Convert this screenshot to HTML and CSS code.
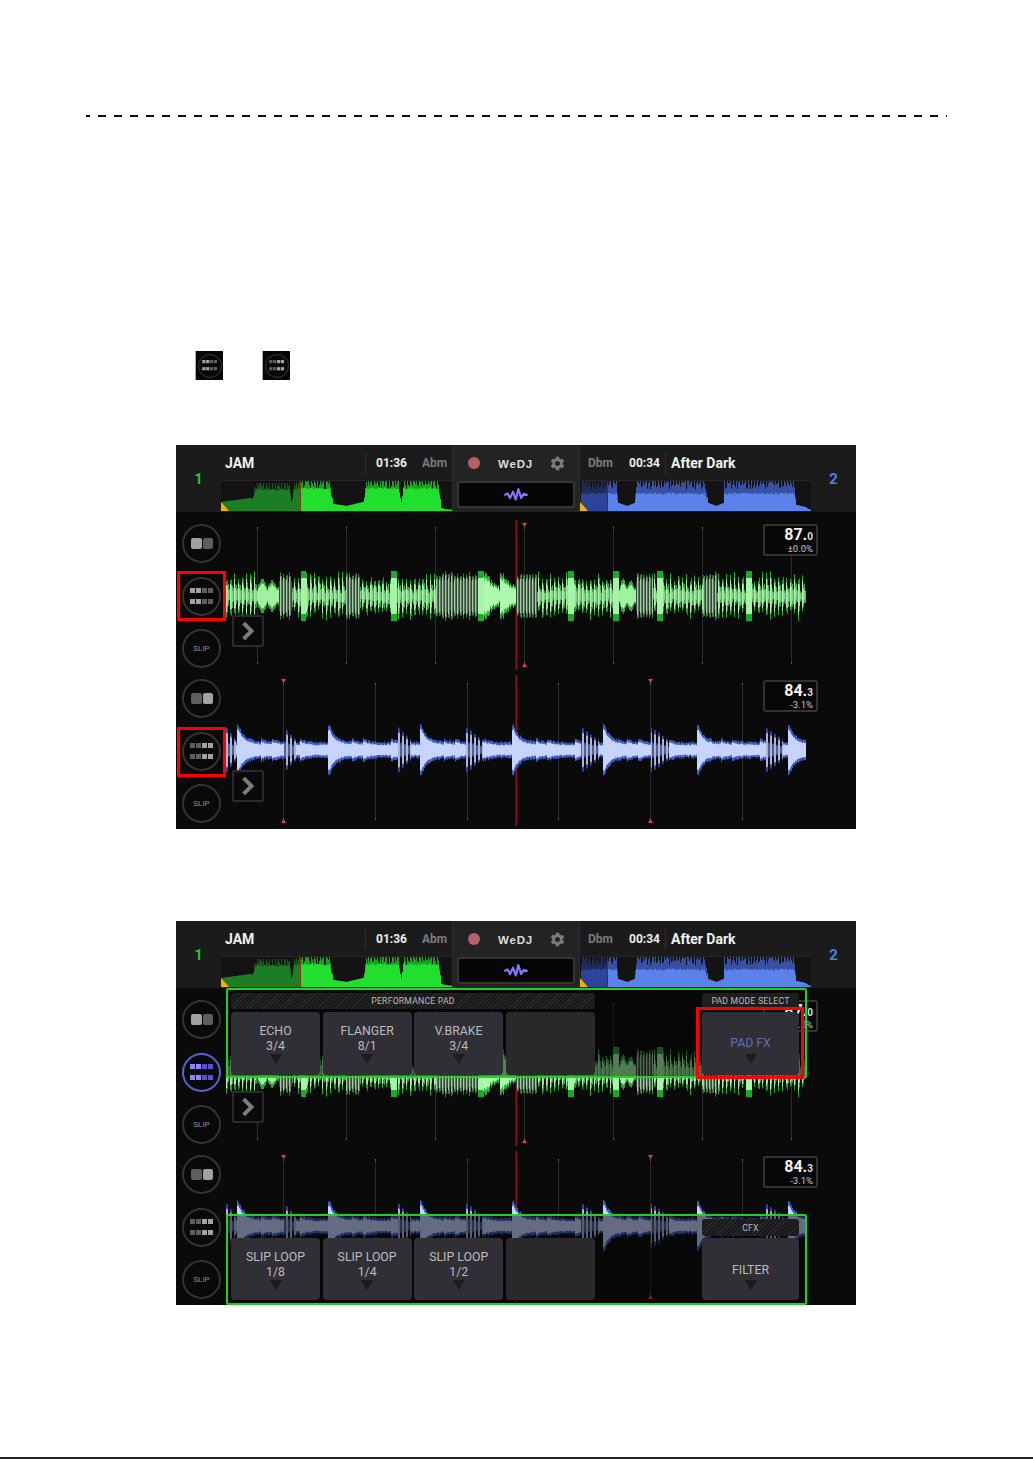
FILE: index.html
```html
<!DOCTYPE html>
<html lang="en">
<head>
<meta charset="utf-8">
<title>WeDJ pad mode</title>
<link rel="stylesheet" href="styles.css">
</head>
<body>
<svg class="defs" aria-hidden="true">
  <symbol id="split" viewBox="0 0 22 11">
    <rect class="a" x="0" y="0" width="11" height="11" rx="2"/>
    <rect class="b" x="12" y="0" width="10" height="11" rx="2"/>
  </symbol>
  <symbol id="cells" viewBox="0 0 24 17">
    <rect class="a" x="0" y="0" width="5" height="5"/><rect class="a" x="6" y="0" width="5" height="5"/>
    <rect class="b" x="12" y="0" width="5" height="5"/><rect class="b" x="18" y="0" width="5" height="5"/>
    <rect class="a" x="0" y="11" width="5" height="5"/><rect class="a" x="6" y="11" width="5" height="5"/>
    <rect class="b" x="12" y="11" width="5" height="5"/><rect class="b" x="18" y="11" width="5" height="5"/>
  </symbol>
  <symbol id="gear" viewBox="0 0 24 24">
    <path d="M19.14 12.94c.04-.3.06-.61.06-.94 0-.32-.02-.64-.07-.94l2.03-1.58a.49.49 0 0 0 .12-.61l-1.92-3.32a.488.488 0 0 0-.59-.22l-2.39.96c-.5-.38-1.03-.7-1.62-.94l-.36-2.54a.484.484 0 0 0-.48-.41h-3.84c-.24 0-.43.17-.47.41l-.36 2.54c-.59.24-1.13.57-1.62.94l-2.39-.96c-.22-.08-.47 0-.59.22L2.74 8.87c-.12.21-.08.47.12.61l2.03 1.58c-.05.3-.09.63-.09.94s.02.64.07.94l-2.03 1.58a.49.49 0 0 0-.12.61l1.92 3.32c.12.22.37.29.59.22l2.39-.96c.5.38 1.03.7 1.62.94l.36 2.54c.05.24.24.41.48.41h3.84c.24 0 .44-.17.47-.41l.36-2.54c.59-.24 1.13-.56 1.62-.94l2.39.96c.22.08.47 0 .59-.22l1.92-3.32c.12-.22.07-.47-.12-.61l-2.01-1.58zM12 15.6c-1.98 0-3.6-1.62-3.6-3.6s1.62-3.6 3.6-3.6 3.6 1.62 3.6 3.6-1.62 3.6-3.6 3.6z"/>
  </symbol>
  <symbol id="pulse" viewBox="0 0 67 40">
    <polyline points="1,22 10,17 17,30 25,12 33,34 40,5 48,30 55,18 66,22" fill="none" stroke="#8378ff" stroke-width="6" stroke-linejoin="round"/>
  </symbol>
</svg>

<main class="page">
  <div class="rule"></div>

  <div class="mini-row">
    <div class="mini lit-front"><div class="mini-ring"><svg class="mini-cells"><use href="#cells"/></svg></div></div>
    <div class="mini lit-back"><div class="mini-ring"><svg class="mini-cells"><use href="#cells"/></svg></div></div>
  </div>

  <section class="screen screen-first">
    <header class="top">
      <div class="deck-no green-no">1</div>
      <div class="track">
        <div class="meta">
          <span class="title title-left">JAM</span><i class="sep"></i>
          <span class="time time-left">01:36</span><span class="key">Abm</span>
        </div>
        <div class="overview"><svg class="ov" data-ov="green" width="231" height="30"></svg><i class="cue-mark"></i></div>
      </div>
      <div class="center">
        <div class="center-row"><i class="rec"></i><span class="logo">WeDJ</span><svg class="gear"><use href="#gear"/></svg></div>
        <div class="wave-btn"><svg class="pulse"><use href="#pulse"/></svg></div>
      </div>
      <div class="track">
        <div class="meta meta-right">
          <span class="key">Dbm</span><span class="time time-right">00:34</span><i class="sep"></i>
          <span class="title">After Dark</span>
        </div>
        <div class="overview"><svg class="ov" data-ov="blue" width="231" height="30"></svg><i class="cue-mark"></i></div>
      </div>
      <div class="deck-no blue-no">2</div>
    </header>
    <div class="decks">
      <div class="deck">
        <div class="btns lit-front">
          <div class="ring"><svg class="ic-split"><use href="#split"/></svg></div>
          <div class="ring"><svg class="ic-cells"><use href="#cells"/></svg></div>
          <div class="ring slip">SLIP</div>
        </div>
        <div class="stage">
          <svg class="wave" data-wave="green" width="630" height="155"></svg>
          <div class="bpm bpm-a"><div class="bpm-big"><b>87.</b><em>0</em></div><small>±0.0%</small></div>
          <div class="chev"><svg viewBox="0 0 32 32"><polyline points="11,7 20,16 11,25"/></svg></div>
        </div>
      </div>
      <div class="deck">
        <div class="btns lit-back">
          <div class="ring"><svg class="ic-split"><use href="#split"/></svg></div>
          <div class="ring"><svg class="ic-cells"><use href="#cells"/></svg></div>
          <div class="ring slip">SLIP</div>
        </div>
        <div class="stage">
          <svg class="wave" data-wave="blue" width="630" height="155"></svg>
          <div class="bpm bpm-b"><div class="bpm-big"><b>84.</b><em>3</em></div><small>-3.1%</small></div>
          <div class="chev"><svg viewBox="0 0 32 32"><polyline points="11,7 20,16 11,25"/></svg></div>
        </div>
      </div>
    </div>
    <i class="mark-red red-a"></i>
    <i class="mark-red red-b"></i>
  </section>

  <section class="screen screen-second">
    <header class="top">
      <div class="deck-no green-no">1</div>
      <div class="track">
        <div class="meta">
          <span class="title title-left">JAM</span><i class="sep"></i>
          <span class="time time-left">01:36</span><span class="key">Abm</span>
        </div>
        <div class="overview"><svg class="ov" data-ov="green" width="231" height="30"></svg><i class="cue-mark"></i></div>
      </div>
      <div class="center">
        <div class="center-row"><i class="rec"></i><span class="logo">WeDJ</span><svg class="gear"><use href="#gear"/></svg></div>
        <div class="wave-btn"><svg class="pulse"><use href="#pulse"/></svg></div>
      </div>
      <div class="track">
        <div class="meta meta-right">
          <span class="key">Dbm</span><span class="time time-right">00:34</span><i class="sep"></i>
          <span class="title">After Dark</span>
        </div>
        <div class="overview"><svg class="ov" data-ov="blue" width="231" height="30"></svg><i class="cue-mark"></i></div>
      </div>
      <div class="deck-no blue-no">2</div>
    </header>
    <div class="decks">
      <div class="deck">
        <div class="btns lit-front">
          <div class="ring"><svg class="ic-split"><use href="#split"/></svg></div>
          <div class="ring ring-on"><svg class="ic-cells"><use href="#cells"/></svg></div>
          <div class="ring slip">SLIP</div>
        </div>
        <div class="stage">
          <svg class="wave" data-wave="green" width="630" height="155"></svg>
          <div class="bpm bpm-a"><div class="bpm-big"><b>87.</b><em>0</em></div><small>±0.0%</small></div>
          <div class="chev"><svg viewBox="0 0 32 32"><polyline points="11,7 20,16 11,25"/></svg></div>
          <div class="panel panel-a">
            <div class="group">
              <div class="tag hatch">PERFORMANCE PAD</div>
              <div class="pads">
                <div class="pad">ECHO<br>3/4<i class="tri"></i></div>
                <div class="pad">FLANGER<br>8/1<i class="tri"></i></div>
                <div class="pad">V.BRAKE<br>3/4<i class="tri"></i></div>
                <div class="pad pad-empty"></div>
              </div>
            </div>
            <div class="group group-mode">
              <div class="tag">PAD MODE SELECT</div>
              <div class="pad pad-single pad-fx">PAD FX<i class="tri"></i></div>
            </div>
          </div>
        </div>
      </div>
      <div class="deck">
        <div class="btns lit-back">
          <div class="ring"><svg class="ic-split"><use href="#split"/></svg></div>
          <div class="ring"><svg class="ic-cells"><use href="#cells"/></svg></div>
          <div class="ring slip">SLIP</div>
        </div>
        <div class="stage">
          <svg class="wave" data-wave="blue" width="630" height="155"></svg>
          <div class="bpm bpm-b"><div class="bpm-big"><b>84.</b><em>3</em></div><small>-3.1%</small></div>
          <div class="panel panel-b">
            <div class="group">
              <div class="tag tag-blank"></div>
              <div class="pads">
                <div class="pad">SLIP LOOP<br>1/8<i class="tri"></i></div>
                <div class="pad">SLIP LOOP<br>1/4<i class="tri"></i></div>
                <div class="pad">SLIP LOOP<br>1/2<i class="tri"></i></div>
                <div class="pad pad-empty"></div>
              </div>
            </div>
            <div class="group group-mode">
              <div class="tag hatch">CFX</div>
              <div class="pad pad-single">FILTER<i class="tri"></i></div>
            </div>
          </div>
        </div>
      </div>
    </div>
    <i class="mark-green green-a"></i>
    <i class="mark-green green-b"></i>
    <i class="mark-red red-c"></i>
  </section>

  <div class="foot-line"></div>
</main>
<script src="wave.js"></script>
</body>
</html>
```

FILE: styles.css
```css
* { box-sizing: border-box; }
html, body { margin: 0; padding: 0; background: #fff; }
body { font-family: Roboto, "Liberation Sans", sans-serif; }
.defs { width: 0; height: 0; position: absolute; }
.page { width: 1033px; height: 1459px; display: flex; flex-direction: column; overflow: hidden; }

.rule {
  margin: 115px 0 0 86px; width: 861px; height: 2px; flex: none;
  background-image: linear-gradient(90deg, #111 0 4px, #fff 4px 12.5px, #111 12.5px 16px);
  background-size: 16px 2px;
}

.a { fill: var(--a); }
.b { fill: var(--b); }
.lit-front { --a: #a2a2a2; --b: #5e5e5e; }
.lit-back { --a: #5e5e5e; --b: #a2a2a2; }
.ring-on { --a: #8e84ff; --b: #5c52c8; }

.mini-row { display: flex; gap: 39px; margin: 234px 0 0 195px; flex: none; }
.mini { width: 28px; height: 29px; background: #060606; border-left: 1px solid #aaa; display: flex; align-items: center; justify-content: center; }
.mini-ring { width: 24px; height: 24px; border-radius: 50%; border: 1px solid #3a3a3a; display: flex; align-items: center; justify-content: center; }
.mini-cells { width: 16px; height: 11px; }

.screen { position: relative; width: 680px; height: 384px; margin-left: 176px; flex: none; background: #0a0a0a; color: #fff; }
.screen-first { margin-top: 65px; }
.screen-second { margin-top: 92px; }

.top { display: grid; grid-template-columns: 45px 231px 128px 231px 45px; height: 67px; background: #1b1b1b; }
.deck-no { font-size: 15px; font-weight: 700; display: flex; align-items: center; justify-content: center; }
.green-no { color: #22c43a; }
.blue-no { color: #4f7be8; }
.track { display: flex; flex-direction: column; }
.meta { height: 36px; display: flex; align-items: center; padding: 1px 0 0 4px; border-bottom: 1px solid #262626; }
.meta-right { padding-left: 8px; }
.title { font-size: 14px; font-weight: 700; color: #f2f2f2; }
.title-left { width: 135px; }
.sep { width: 1px; height: 21px; background: #2e2e2e; margin: 0 5px; flex: none; }
.time { font-size: 12px; font-weight: 700; color: #ececec; }
.time-left { margin-left: 5px; width: 46px; }
.time-right { margin-left: 15px; width: 32px; }
.key { font-size: 12px; font-weight: 700; color: #7b7b7b; width: 26px; }
.meta-right .sep { margin: 0 5px 0 4px; }
.overview { position: relative; height: 30px; background: #131313; }
.ov { display: block; }
.cue-mark { position: absolute; left: 0; bottom: 0; width: 0; height: 0; border-left: 8px solid #f0b400; border-top: 9px solid transparent; }

.center { background: #232323; border-left: 1px solid #2c2c2c; border-right: 1px solid #2c2c2c; display: flex; flex-direction: column; }
.center-row { height: 36px; display: flex; align-items: center; padding-left: 15px; }
.rec { width: 12px; height: 12px; border-radius: 50%; background: #b5606a; flex: none; }
.logo { margin-left: 18px; width: 36px; padding-top: 1px; font: 700 11.5px "Liberation Sans", sans-serif; letter-spacing: .8px; color: #ddd; white-space: nowrap; }
.gear { margin-left: 15px; width: 17px; height: 17px; fill: #7c7c7c; }
.wave-btn { margin: 0 4px 0 4px; height: 27px; background: #050505; border: 2px solid #353535; border-radius: 3px; display: flex; align-items: center; justify-content: center; }
.pulse { width: 24px; height: 15px; }

.decks { padding-top: 6px; }
.deck { height: 155px; display: flex; position: relative; }
.btns { width: 50px; padding: 6px 0 0 6px; display: flex; flex-direction: column; gap: 13.5px; flex: none; }
.ring { width: 39px; height: 39px; border-radius: 50%; border: 2px solid #333; background: #090909; display: flex; align-items: center; justify-content: center; flex: none; }
.ring-on { border-color: #5a5fd0; }
.slip { font-size: 8px; color: #8c8c8c; }
.ic-split { width: 22px; height: 11px; }
.ic-cells { width: 24px; height: 17px; margin-top: 1px; }

.stage { position: relative; width: 630px; height: 155px; }
.wave { display: block; filter: blur(.5px); }
.bpm { position: absolute; left: 537px; width: 55px; height: 32px; z-index: 1; background: #060606; border: 2px solid #333; border-radius: 3px; text-align: right; padding: 0 3px 0 0; }
.bpm-a { top: 6px; }
.bpm-b { top: 7px; }
.bpm-big { height: 17px; line-height: 17px; }
.bpm b { font-size: 16px; font-weight: 700; color: #f4f4f4; }
.bpm em { font-style: normal; font-weight: 700; font-size: 10px; color: #ddd; }
.bpm small { display: block; height: 11px; line-height: 11px; font-size: 9.5px; color: #c8c8c8; }
.chev { position: absolute; left: 6px; top: 97px; width: 32px; height: 32px; z-index: 1; border: 2px solid #2b2b2b; border-radius: 2px; background: #0a0a0a; }
.chev svg { display: block; width: 28px; height: 28px; }
.chev polyline { fill: none; stroke: #7c7c7c; stroke-width: 4.5; }

.panel { position: absolute; left: 0; width: 580px; background: rgba(4, 4, 4, .5); display: flex; justify-content: space-between; padding: 4px 7px 0 5px; }
.panel-a { top: -5px; height: 88px; }
.panel-b { top: 66px; height: 90px; }
.group { display: flex; flex-direction: column; gap: 3px; width: 364px; }
.group-mode { width: 97px; }
.panel-b .group { gap: 2px; }
.tag { position: relative; z-index: 2; height: 16px; border-radius: 3px; background: #1e1e1e; color: #bcbcbc; font-size: 8.7px; line-height: 17px; text-align: center; letter-spacing: .2px; white-space: nowrap; }
.panel-b .tag { height: 17px; line-height: 19px; }
.hatch { background: repeating-linear-gradient(135deg, #2a2a2a 0 1px, #191919 1px 3px); }
.tag-blank { visibility: hidden; }
.pads { display: grid; grid-template-columns: repeat(4, 89px); column-gap: 2.6px; }
.pad { position: relative; z-index: 2; height: 63px; border-radius: 4px; background: #2f2f35; color: #bdbdbd; font-size: 12.3px; line-height: 15px; text-align: center; padding-top: 12px; }
.panel-b .pad { height: 62px; }
.pad-empty { background: #292929; }
.pad-single { padding-top: 24px; }
.panel-b .pad-single { padding-top: 25px; }
.pad-fx { color: #666cb4; }
.tri { position: absolute; left: 50%; bottom: 11px; margin-left: -6px; width: 0; height: 0; border-left: 6px solid transparent; border-right: 6px solid transparent; border-top: 10px solid #1c1c1e; }
.panel-b .tri { bottom: 10px; }

.mark-red, .mark-green { position: absolute; z-index: 5; display: block; }
.mark-red { border: 3px solid #f00; }
.red-a { left: 1px; top: 126px; width: 49px; height: 50px; }
.red-b { left: 1px; top: 282px; width: 49px; height: 50px; }
.red-c { left: 520px; top: 86px; width: 108px; height: 72px; }
.mark-green { left: 50px; width: 581px; border: 2px solid #1fd21f; border-radius: 2px; }
.green-a { top: 67px; height: 90px; }
.green-b { top: 293px; height: 91px; }

.foot-line { margin-top: 152px; height: 2px; background: #222; flex: none; }
```

FILE: wave.js
```js
(function () {
  var NS = 'http://www.w3.org/2000/svg';
  function rng(seed) {
    var s = seed;
    return function () { s = (s * 16807) % 2147483647; return s / 2147483647; };
  }
  function Painter(svg) {
    this.svg = svg; this.layers = {}; this.order = [];
  }
  Painter.prototype.add = function (color, x, y0, y1) {
    if (!this.layers[color]) { this.layers[color] = []; this.order.push(color); }
    this.layers[color].push('M' + x + ' ' + y0.toFixed(1) + 'V' + y1.toFixed(1));
  };
  Painter.prototype.flush = function () {
    var self = this;
    this.order.forEach(function (c) {
      var p = document.createElementNS(NS, 'path');
      p.setAttribute('d', self.layers[c].join(''));
      p.setAttribute('stroke', c);
      p.setAttribute('stroke-width', '1');
      p.setAttribute('fill', 'none');
      self.svg.appendChild(p);
    });
    this.layers = {}; this.order = [];
  };
  function tri(svg, x, y, up) {
    var p = document.createElementNS(NS, 'polygon');
    p.setAttribute('points', up
      ? (x - 2.5) + ',' + (y + 2) + ' ' + (x + 2.5) + ',' + (y + 2) + ' ' + x + ',' + (y - 2)
      : (x - 2.5) + ',' + (y - 2) + ' ' + (x + 2.5) + ',' + (y - 2) + ' ' + x + ',' + (y + 2));
    p.setAttribute('fill', '#d8434f');
    svg.appendChild(p);
  }
  function grid(svg, xs, cues, top, bottom) {
    var g = new Painter(svg);
    xs.forEach(function (x) {
      var px = Math.floor(x) + 0.5;
      g.add('#2c2c2c', px, top, bottom);
      g.add('#5a5a5a', px, top, top + 2);
      g.add('#5a5a5a', px, bottom - 2, bottom);
    });
    g.flush();
    cues.forEach(function (x) {
      tri(svg, Math.floor(x) + 0.5, top - 2, false);
      tri(svg, Math.floor(x) + 0.5, bottom + 1, true);
    });
  }
  function playhead(svg, y0, y1) {
    var r = document.createElementNS(NS, 'rect');
    r.setAttribute('x', 289.5); r.setAttribute('y', y0);
    r.setAttribute('width', 1.6); r.setAttribute('height', y1 - y0);
    r.setAttribute('fill', '#8a1418');
    svg.appendChild(r);
  }

  /* x values are stage pixels: the stage starts 50px into the screen */
  var GREEN_SEGS = [
    [0, 31, 'spiky'], [31, 53, 'lump'], [53, 66, 'dense'], [66, 75, 'spiky'], [75, 80, 'hit'],
    [80, 120, 'spiky'], [120, 134, 'dense'], [134, 165, 'low'], [165, 171, 'hit'], [171, 210, 'spiky'],
    [210, 252, 'dense'], [252, 257, 'hit'], [257, 274, 'decay'], [274, 290, 'decay'], [290, 311, 'dense'],
    [311, 342, 'spiky'], [342, 348, 'hit'], [348, 364, 'low'], [364, 387, 'spiky'], [387, 393, 'hit'],
    [393, 410, 'lump'], [410, 427, 'dense'], [427, 431, 'spiky'], [431, 437, 'hit'], [437, 477, 'spiky'],
    [477, 491, 'dense'], [491, 520, 'spiky'], [520, 526, 'hit'], [526, 534, 'low'], [534, 580, 'spiky']
  ];
  function drawGreen(svg) {
    var r = rng(4711), cy = 78, p = new Painter(svg);
    GREEN_SEGS.forEach(function (seg) {
      var a = seg[0], b = seg[1], t = seg[2];
      for (var x = a; x < b; x++) {
        var f = (x - a) / Math.max(1, b - a), px = x + 0.5, amp, up, dn;
        if (t === 'hit') {
          p.add('#16ad27', px, cy - 25, cy + 25);
          p.add('#a4f6a6', px, cy - 18, cy + 18);
        } else if (t === 'decay') {
          amp = 16 * Math.pow(1 - f, 1.5) + 6 + r() * 5;
          p.add('#2ab53a', px, cy - amp, cy + amp);
          p.add('#aefaae', px, cy - amp * 0.76, cy + amp * 0.76);
        } else if (t === 'lump') {
          amp = 11 * Math.abs(Math.sin(f * 7)) * (1 - f * 0.4) + 6 + r() * 2;
          p.add('#2fa83b', px, cy - amp, cy + amp);
          p.add('#a0f2a2', px, cy - amp * 0.72, cy + amp * 0.72);
        } else if (t === 'dense') {
          amp = 20 + r() * 5;
          if (x % 3 === 0) {
            p.add('#1c8a2a', px, cy - amp, cy + amp);
            p.add('#9ad09c', px, cy - amp * 0.82, cy + amp * 0.82);
          } else if (x % 3 === 1) {
            p.add('#5f7561', px, cy - amp * 0.9, cy + amp * 0.9);
          } else {
            p.add('#3a453b', px, cy - amp * 0.7, cy + amp * 0.7);
          }
        } else {
          var limit = t === 'low' ? 17 : 25;
          var m = x % 4;
          if (m === 0) {
            up = 14 + r() * (limit - 14); dn = 14 + r() * (limit - 14);
            p.add('#1fa82f', px, cy - up, cy + dn);
            p.add('#a6f2a8', px, cy - up * 0.75, cy + dn * 0.75);
          } else if (m === 1) {
            up = 9 + r() * 11; dn = 9 + r() * 11;
            p.add('#2f8f3a', px, cy - up, cy + dn);
            p.add('#8fe093', px, cy - up * 0.65, cy + dn * 0.65);
          } else if (m === 2) {
            up = 5 + r() * 8; dn = 5 + r() * 8;
            p.add('#4a9c50', px, cy - up, cy + dn);
            p.add('#86d08a', px, cy - up * 0.5, cy + dn * 0.5);
          } else {
            up = 3 + r() * 6; dn = 3 + r() * 6;
            p.add('#5cab60', px, cy - up, cy + dn);
          }
        }
      }
    });
    p.flush();
  }

  var BLUE_HITS = [12, 103, 195, 287, 378, 472, 563];
  var BLUE_COMB = [[0, 10], [58, 70], [172, 185], [240, 257], [355, 373], [425, 443], [540, 557]];
  function drawBlue(svg) {
    var r = rng(90210), cy = 77, p = new Painter(svg);
    for (var x = 0; x < 580; x++) {
      var px = x + 0.5;
      var bump = 5.2 + r() * 1.5, hit = 0, comb = null, i;
      for (i = 0; i < BLUE_HITS.length; i++) {
        var d = x - BLUE_HITS[i];
        if (d >= -1 && d < 50) hit = Math.max(hit, 15 * Math.exp(-Math.max(d, 0) / 5.5) + 2.5 * Math.exp(-Math.max(d, 0) / 18));
        [23, 34, 62].forEach(function (o) {
          var e = d - o;
          if (e >= 0 && e < 14) hit = Math.max(hit, 3.6 * Math.exp(-e / 6));
        });
      }
      for (i = 0; i < BLUE_COMB.length; i++) {
        if (x >= BLUE_COMB[i][0] && x < BLUE_COMB[i][1]) comb = (x - BLUE_COMB[i][0]) / (BLUE_COMB[i][1] - BLUE_COMB[i][0]);
      }
      var amp = bump + hit;
      if (comb !== null) {
        var a = (22 - comb * 13) * (x % 4 < 2 ? 1 : 0.35) + r();
        p.add('#2e46a0', px, cy - a, cy + a);
        p.add(x % 4 < 2 ? '#aab4dc' : '#556088', px, cy - a * 0.78, cy + a * 0.78);
      } else {
        var up = amp + 0.8 + r() * 1.6, dn = amp + 0.8 + r() * 1.6;
        p.add('#3f5fc8', px, cy - up, cy + dn);
        p.add('#c6d4ff', px, cy - amp * 0.86, cy + amp * 0.86);
      }
    }
    p.flush();
  }

  var OV = {
    green: {
      pts: [[0,9],[30,13],[35,28],[68,28],[70,9],[73,28],[79,30],[108,30],[112,7],[125,5],[142,9],[145,30],[177,30],[180,9],[182,30],[217,30],[220,3],[231,0]],
      played: 79, seed: 77, solid: 0.72,
      top: '#15a522', fill: '#22df2e', ptop: '#125a17', pfill: '#1d7d24', head: '#8a3a10'
    },
    blue: {
      pts: [[0,0],[1,30],[36,30],[38,8],[47,5],[54,8],[56,30],[124,30],[128,8],[136,5],[143,8],[144,30],[214,30],[216,6],[225,4],[231,0]],
      played: 27, seed: 131, solid: 0.55,
      top: '#3a50a4', fill: '#5b82ea', ptop: '#1f2a56', pfill: '#2e439a', head: '#7c1c24'
    }
  };
  function drawOverview(svg, kind) {
    var o = OV[kind], r = rng(o.seed), p = new Painter(svg), h = 30;
    for (var x = 0; x < 231; x++) {
      var e = 0;
      for (var i = 0; i + 1 < o.pts.length; i++) {
        var A = o.pts[i], B = o.pts[i + 1];
        if (x >= A[0] && x <= B[0]) { e = A[1] + (B[1] - A[1]) * (x - A[0]) / Math.max(1, B[0] - A[0]); break; }
      }
      var played = x < o.played, px = x + 0.5, tall = e > 15;
      var upper = tall ? e * (x % 3 === 0 ? 1 : 0.72 + r() * 0.28) : e;
      var solid = tall ? e * o.solid + r() * 2 : e;
      if (upper > 0) p.add(played ? o.ptop : o.top, px, h - upper, h);
      if (solid > 0) p.add(played ? o.pfill : o.fill, px, h - solid, h);
      if (e > 0) p.add(played ? o.pfill : o.fill, px, h - 1.5, h);
    }
    p.add(o.head, o.played + 0.5, 0, h);
    p.flush();
  }

  document.querySelectorAll('svg[data-ov]').forEach(function (s) { drawOverview(s, s.getAttribute('data-ov')); });
  document.querySelectorAll('svg[data-wave]').forEach(function (s) {
    if (s.getAttribute('data-wave') === 'green') {
      grid(s, [31, 120, 209, 298, 387, 476, 565], [298], 9, 146);
      playhead(s, 2, 152);
      drawGreen(s);
    } else {
      grid(s, [57, 149, 241, 332, 424, 516], [57, 424], 10, 147);
      playhead(s, 2, 153);
      drawBlue(s);
    }
  });
})();
```
